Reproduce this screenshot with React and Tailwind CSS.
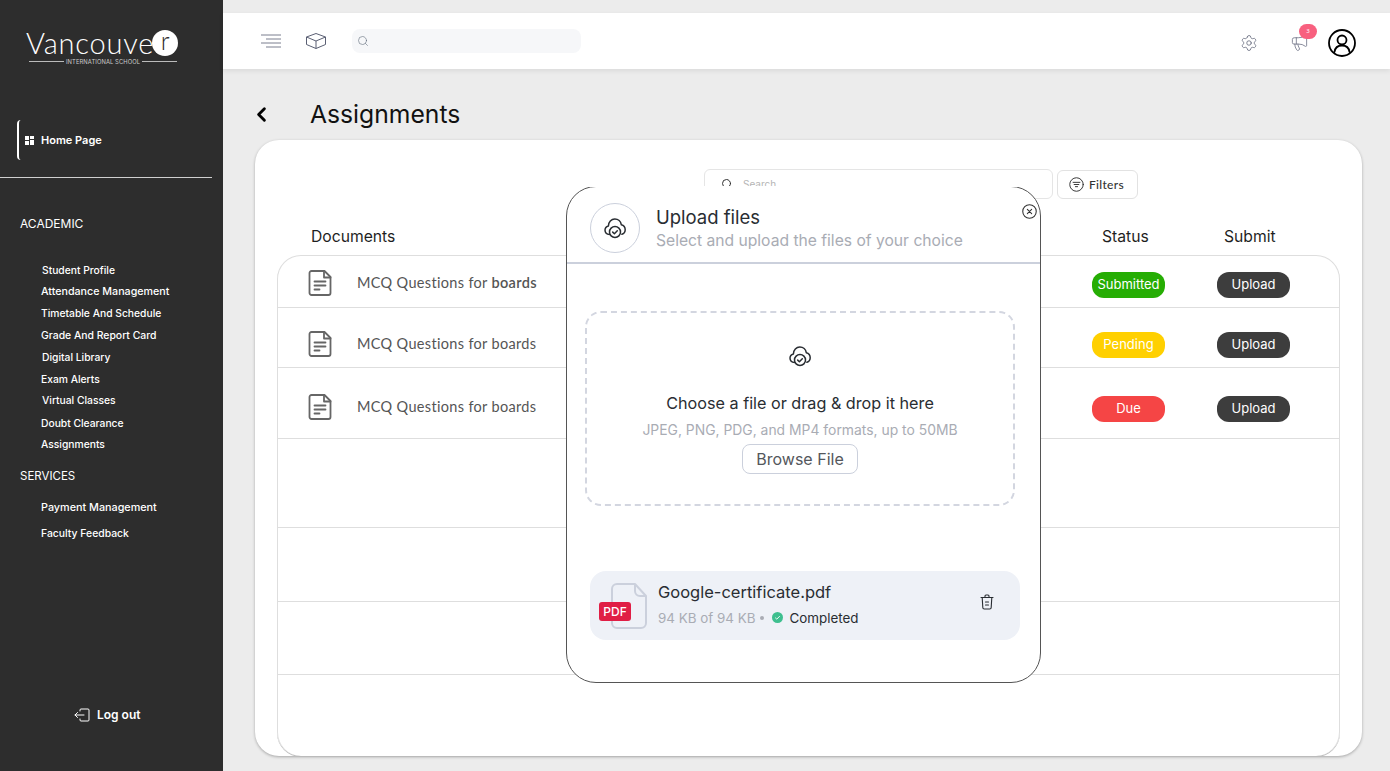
import React from 'react';
import { ChevronLeft, Search, Settings, Megaphone } from 'lucide-react';

const academicLinks = [
  { label: 'Student Profile', className: 'mt-0 ml-[42px] text-[10.300px]' },
  { label: 'Attendance Management', className: 'mt-2 ml-[41px] text-[10.700px]' },
  { label: 'Timetable And Schedule', className: 'mt-[7px] ml-[41px] text-[10.300px]' },
  { label: 'Grade And Report Card', className: 'mt-[9px] ml-[41px] text-[10.400px]' },
  { label: 'Digital Library', className: 'mt-[7px] ml-[42px] text-[10.300px]' },
  { label: 'Exam Alerts', className: 'mt-2 ml-[41px] text-[10.300px]' },
  { label: 'Virtual Classes', className: 'mt-[7px] ml-[42px] text-[10.300px]' },
  { label: 'Doubt Clearance', className: 'mt-[9px] ml-[41px] text-[10.300px]' },
  { label: 'Assignments', className: 'mt-[7px] ml-[41px] text-[10.300px]' },
];

const rows = [
  { height: 'h-[52px] pt-4', status: 'Submitted', color: 'bg-[#26ad04]', textGap: 'mb-1', bold: true },
  { height: 'h-[60px] pt-6', status: 'Pending', color: 'bg-[#ffd000]', textGap: 'mb-[2px]' },
  { height: 'h-[71px] pt-7', status: 'Due', color: 'bg-[#f54545]', textGap: 'mb-1' },
];

const CloudCheck = ({ className }) => (
  <svg viewBox="0 0 24 24" fill="none" stroke="currentColor" strokeWidth="1.5" strokeLinecap="round" strokeLinejoin="round" className={className}>
    <path d="M6.600 18.600C3.900 18.400 2 16.500 2 14.100c0-2 1.400-3.700 3.400-4.200C5.500 6 8.300 3 11.800 3c3.400 0 6 2.500 6.500 5.700 2.300.6 3.900 2.500 3.900 5 0 2.200-1.300 3.900-3.300 4.500" />
    <circle cx="12" cy="16" r="5.500" />
    <path d="M9.700 16.100l1.700 1.600 2.900-3" />
  </svg>
);

const DocIcon = () => (
  <svg viewBox="0 0 24 26" fill="none" stroke="#666" strokeWidth="1.800" strokeLinecap="round" strokeLinejoin="round" className="h-[26px] w-6 shrink-0">
    <path d="M3.500 1h13l6 6v16a2 2 0 0 1-2 2H3.500a2 2 0 0 1-2-2V3a2 2 0 0 1 2-2z" />
    <path d="M16 1v6.500h6.500" />
    <path d="M6.500 11.500h11M6.500 15.500h11M6.500 19.500h5" />
  </svg>
);

const Sidebar = () => (
  <aside className="w-[223px] h-full shrink-0 bg-[#2d2d2d] text-white flex flex-col font-['Inter',sans-serif]">
    <div className="pt-[28px] pl-[26px]">
      <div className="flex items-center h-[29px]">
        <span className="font-['Lato',sans-serif] font-light text-[29px] leading-none tracking-[0.8px]">Vancouve</span>
        <span className="ml-[-2px] w-[26px] h-[26px] rounded-full bg-white text-[#2d2d2d] flex items-center justify-center font-['Lato',sans-serif] font-light text-[25px] leading-none pb-1">r</span>
      </div>
      <div className="flex items-center ml-[3px] mt-[1px] w-[148px] gap-[2px]">
        <span className="h-px flex-1 bg-[#bbbbbb]" />
        <span className="text-[5.800px] leading-[7px] text-[#cccccc] tracking-[0.1px]">INTERNATIONAL SCHOOL</span>
        <span className="h-px flex-1 bg-[#bbbbbb]" />
      </div>
    </div>
    <div className="mt-[55px] ml-[17px] h-10 border-l-2 border-white rounded-sm flex items-center pl-[6px]">
      <svg viewBox="0 0 9 9" className="w-[9px] h-[9px] fill-white">
        <rect x="0" y="0" width="4" height="4" />
        <rect x="5" y="0" width="4" height="3" />
        <rect x="0" y="5" width="4" height="4" />
        <rect x="5" y="4" width="4" height="5" />
      </svg>
      <span className="ml-[7px] text-[11px] font-semibold leading-none">Home Page</span>
    </div>
    <div className="mt-[17px] w-[212px] h-px bg-[#cfcfcf]" />
    <div className="mt-[39px] ml-5 text-xs leading-[14px]">ACADEMIC</div>
    <nav className="mt-[32px] flex flex-col leading-[14px] font-medium">
      {academicLinks.map((link) => (
        <a key={link.label} className={link.className}>
          {link.label}
        </a>
      ))}
    </nav>
    <div className="mt-[18px] ml-5 text-[11.500px] leading-[14px]">SERVICES</div>
    <div className="mt-[18px] ml-[41px] text-[10.800px] leading-[14px] font-medium">Payment Management</div>
    <div className="mt-3 ml-[41px] text-[10.400px] leading-[14px] font-medium">Faculty Feedback</div>
    <div className="mt-[167px] ml-[74px] flex items-center gap-[7px]">
      <svg viewBox="0 0 16 14" fill="none" stroke="#fff" strokeWidth="1" strokeLinecap="round" strokeLinejoin="round" className="w-4 h-[14px]">
        <path d="M6 3V2a1 1 0 0 1 1-1h7a1 1 0 0 1 1 1v10a1 1 0 0 1-1 1H7a1 1 0 0 1-1-1v-1" />
        <path d="M10 7H1M3.500 4.500L1 7l2.500 2.500" />
      </svg>
      <span className="text-xs font-semibold leading-none">Log out</span>
    </div>
  </aside>
);

const Topbar = () => (
  <header className="mt-[13px] h-14 bg-white shadow-[0_2px_5px_rgba(0,0,0,0.08)] flex items-center pl-[38px] pr-[34px]">
    <svg viewBox="0 0 20 14" fill="none" stroke="#7b7f8f" strokeWidth="1" className="w-5 h-[14px]">
      <path d="M0 1h20M5 5h15M0 9h20M5 13h15" />
    </svg>
    <svg viewBox="0 0 20 16" fill="none" stroke="#5a5f73" strokeWidth="1" strokeLinejoin="round" className="ml-[25px] w-5 h-4">
      <path d="M10 .5l9.500 3.500v7.500L10 15.500.5 11.500V4z" />
      <path d="M.5 4L10 8l9.500-4M10 8v7.500" />
    </svg>
    <div className="ml-[26px] w-[229px] h-6 rounded-lg bg-[#f6f7f9] flex items-center pl-[5px]">
      <Search size={12} strokeWidth={1.200} className="text-[#5f6b7a]" />
    </div>
    <Settings size={18} strokeWidth={1} className="ml-auto mt-1 mr-[-3px] text-[#5a5f73]" />
    <div className="relative ml-[35px] mt-[2px]">
      <Megaphone size={19} strokeWidth={1} className="text-[#6a6f83]" />
      <span className="absolute left-[9px] top-[-9px] w-[18px] h-[15px] rounded-full bg-[#f8607f] text-white text-[6px] flex items-center justify-center">3</span>
    </div>
    <svg viewBox="0 0 28 28" fill="none" stroke="#000" strokeWidth="1.800" strokeLinecap="round" className="ml-[19px] mt-1 w-7 h-7">
      <circle cx="14" cy="14" r="13" />
      <circle cx="14" cy="11" r="4.500" />
      <path d="M6.500 23c.6-4.500 3.500-6.500 7.500-6.500s6.900 2 7.500 6.500" />
    </svg>
  </header>
);

const DocumentsCard = () => (
  <section className="ml-8 mt-[10px] w-[1107px] h-[616px] bg-white rounded-3xl shadow-[0_1px_3px_rgba(0,0,0,0.3)] flex flex-col font-['Inter',sans-serif]">
    <div className="flex ml-[449px] mt-[29px] gap-1">
      <div className="w-[349px] h-[30px] rounded-md border border-[#e5e5e5] flex items-center pl-4 text-[10px] text-[#b5b5b5]">
        <Search size={12} className="text-[#333]" />
        <span className="ml-[10px]">Search</span>
      </div>
      <div className="w-[81px] h-[29px] mt-px rounded-md border border-[#e2e2e2] flex items-center pl-[11px] gap-[5px] font-['Lato',sans-serif] text-xs font-medium tracking-[0.3px] text-[#333]">
        <svg viewBox="0 0 14 14" fill="none" stroke="#333" strokeWidth="0.900" strokeLinecap="round" className="w-[15px] h-[15px]">
          <circle cx="7" cy="7" r="6.300" />
          <path d="M3.800 5h6.400M4.800 7h4.400M6 9h2" />
        </svg>
        Filters
      </div>
    </div>
    <div className="relative mt-7 h-5 text-[15.700px] leading-5 text-[#1f1f1f]">
      <span className="ml-14">Documents</span>
      <span className="absolute left-[847px]">Status</span>
      <span className="absolute left-[969px]">Submit</span>
    </div>
    <div className="ml-[22px] mt-2 w-[1063px] flex-1 border border-b-0 border-[#dedede] rounded-3xl shadow-[0_1px_0_#bbb]">
      {rows.map((row) => (
        <div key={row.status} className={`${row.height} border-b border-[#dedede]`}>
          <div className="flex items-center h-[26px] pl-[30px]">
            <div className={`flex items-center ${row.textGap}`}>
              <DocIcon />
              <span className="ml-[25px] font-['Lato',sans-serif] text-[14.500px] tracking-[0.33px] text-[#555]">
                MCQ Questions for {row.bold ? <b className="font-semibold">boards</b> : 'boards'}
              </span>
            </div>
            <span className={`ml-auto w-[73px] h-[26px] rounded-xl ${row.color} text-white text-[13px] flex items-center justify-center`}>{row.status}</span>
            <button className="ml-[52px] mr-[49px] w-[73px] h-[26px] rounded-xl bg-[#3d3d3d] text-white text-[13px] flex items-center justify-center">Upload</button>
          </div>
        </div>
      ))}
      <div className="h-[89px] border-b border-[#dedede]" />
      <div className="h-[74px] border-b border-[#dedede]" />
      <div className="h-[73px] border-b border-[#dedede]" />
    </div>
  </section>
);

const UploadModal = () => (
  <div className="absolute left-[566px] top-[186px] w-[475px] h-[497px] bg-white border border-[#555] rounded-[30px] flex flex-col font-['Inter',sans-serif]">
    <span className="absolute left-[22px] right-[22px] top-[-1px] h-px bg-white" />
    <svg viewBox="0 0 14 14" fill="none" stroke="#333" strokeWidth="1" strokeLinecap="round" className="absolute right-[3px] top-[17px] w-[15px] h-[15px]">
      <circle cx="7" cy="7" r="6.300" />
      <path d="M5 5l4 4M9 5l-4 4" />
    </svg>
    <div className="h-[77px] shrink-0 border-b-2 border-[#cbd0dc] flex items-start pl-[23px] pt-4">
      <div className="w-[50px] h-[50px] rounded-full border border-[#cbd0dc] flex items-center justify-center text-[#292d32]">
        <CloudCheck className="w-6 h-6" />
      </div>
      <div className="ml-4 mt-[2px]">
        <div className="text-[18.500px] leading-6 text-[#292d32]">Upload files</div>
        <div className="text-[15.650px] leading-6 text-[#a9acb4]">Select and upload the files of your choice</div>
      </div>
    </div>
    <div className="ml-[18px] mt-[47px] w-[430px] h-[195px] border-2 border-dashed border-[#d3d6e0] rounded-2xl flex flex-col items-center pt-[31px]">
      <CloudCheck className="w-6 h-6 text-[#292d32]" />
      <div className="mt-[25px] text-[16.200px] leading-5 text-[#292d32]">Choose a file or drag &amp; drop it here</div>
      <div className="mt-[7px] text-[13.900px] leading-5 text-[#a9acb4]">JPEG, PNG, PDG, and MP4 formats, up to 50MB</div>
      <button className="mt-1 w-[116px] h-[30px] rounded-lg border border-[#cbd0dc] text-base text-[#54575c]">Browse File</button>
    </div>
    <div className="ml-[23px] mt-[65px] w-[430px] h-[69px] rounded-2xl bg-[#eef1f7] flex items-center relative">
      <svg viewBox="0 0 36 46" fill="none" stroke="#cbd0dc" strokeWidth="2" strokeLinejoin="round" className="ml-[21px] w-9 h-[46px] shrink-0">
        <path d="M6 1h18l11 12v27a5 5 0 0 1-5 5H6a5 5 0 0 1-5-5V6a5 5 0 0 1 5-5z" />
        <path d="M24 1v7a5 5 0 0 0 5 5h6" />
      </svg>
      <span className="absolute left-[9px] top-[31px] w-8 h-[19px] rounded-[3px] bg-[#e01e45] text-white text-xs font-medium flex items-center justify-center">PDF</span>
      <div className="ml-[11px] mb-1">
        <div className="text-[16.500px] leading-6 text-[#292d32]">Google-certificate.pdf</div>
        <div className="mt-1 flex items-center text-[13.400px] leading-5 text-[#a9acb4]">
          94 KB of 94 KB
          <span className="mx-[5px] w-1 h-1 rounded-full bg-[#a9acb4]" />
          <svg viewBox="0 0 12 12" className="ml-[3px] w-[11px] h-[11px] mr-[6px]">
            <circle cx="6" cy="6" r="6" fill="#3ebf8f" />
            <path d="M3.500 6.200l1.700 1.600 3.300-3.300" fill="none" stroke="#fff" strokeWidth="1" />
          </svg>
          <span className="text-[#292d32]">Completed</span>
        </div>
      </div>
      <svg viewBox="0 0 14 16" fill="none" stroke="#292d32" strokeWidth="1.100" strokeLinecap="round" strokeLinejoin="round" className="absolute right-[26px] top-[23px] w-[14px] h-4">
        <path d="M1 3.500h12M5 3.500V2a1 1 0 0 1 1-1h2a1 1 0 0 1 1 1v1.500" />
        <path d="M2.200 3.500l.6 10a1.500 1.500 0 0 0 1.500 1.500h5.400a1.500 1.500 0 0 0 1.500-1.500l.6-10" />
        <path d="M5.500 8h3M5.500 11h3" />
      </svg>
    </div>
  </div>
);

export default function App() {
  return (
    <div className="relative w-[1390px] h-[771px] overflow-hidden flex bg-[#ececec]">
      <Sidebar />
      <main className="flex-1 flex flex-col min-w-0">
        <Topbar />
        <div className="mt-[29px] h-[32px] flex items-center ml-[27px]">
          <ChevronLeft size={23} strokeWidth={3} className="text-black" />
          <h1 className="ml-[37px] font-['Inter',sans-serif] text-[24.700px] leading-8 text-[#111]">Assignments</h1>
        </div>
        <DocumentsCard />
      </main>
      <UploadModal />
    </div>
  );
}
